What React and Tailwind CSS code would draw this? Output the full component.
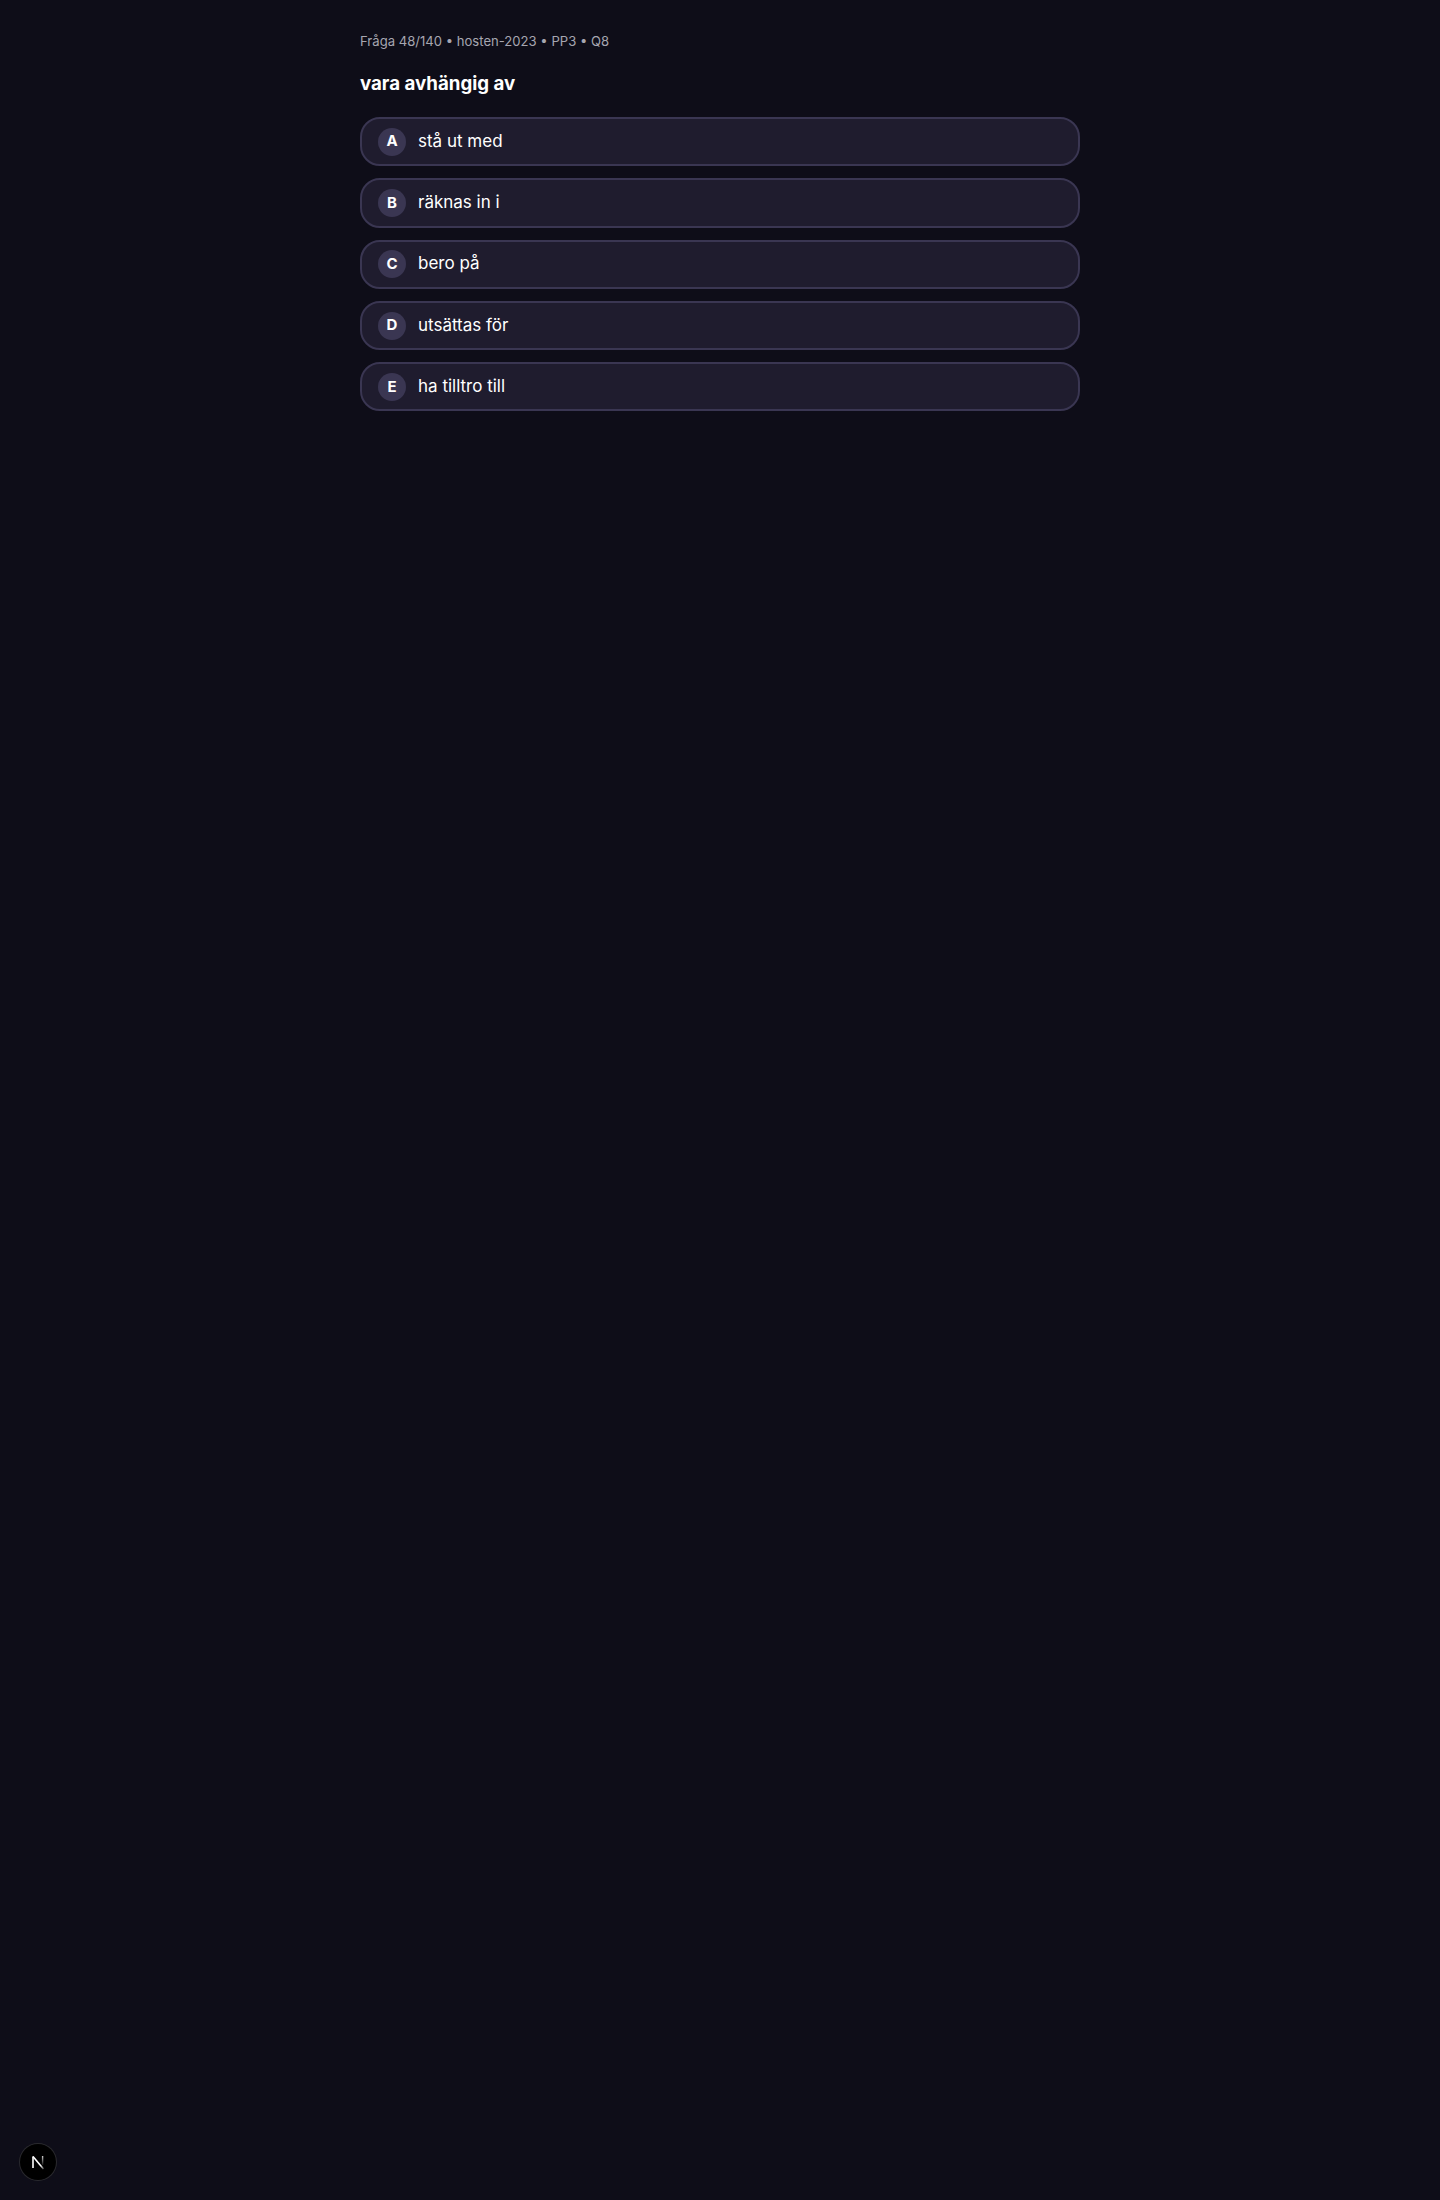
const options = [
  { letter: 'A', text: 'stå ut med' },
  { letter: 'B', text: 'räknas in i' },
  { letter: 'C', text: 'bero på' },
  { letter: 'D', text: 'utsättas för' },
  { letter: 'E', text: 'ha tilltro till' },
];

function NextBadge() {
  return (
    <div className="fixed bottom-5 left-5 flex h-9 w-9 items-center justify-center rounded-full bg-black shadow-[0_0_0_1px_#2a2a2e]">
      <svg width="16" height="16" viewBox="0 0 16 16" fill="none">
        <defs>
          <linearGradient id="next-slash" x1="4" y1="3" x2="14" y2="15" gradientUnits="userSpaceOnUse">
            <stop stopColor="#fff" />
            <stop offset="0.7" stopColor="#fff" />
            <stop offset="1" stopColor="#fff" stopOpacity="0.2" />
          </linearGradient>
          <linearGradient id="next-bar" x1="12" y1="2" x2="12" y2="11" gradientUnits="userSpaceOnUse">
            <stop stopColor="#fff" stopOpacity="0.8" />
            <stop offset="1" stopColor="#fff" stopOpacity="0.1" />
          </linearGradient>
        </defs>
        <path d="M3 14V2.5" stroke="#fff" strokeWidth="1.6" />
        <path d="M3 2.5L13.5 15" stroke="url(#next-slash)" strokeWidth="1.6" />
        <path d="M12.6 2V11" stroke="url(#next-bar)" strokeWidth="1.4" />
      </svg>
    </div>
  );
}

export default function App() {
  return (
    <div className="min-h-[2200px] bg-[#0e0d18] font-['Inter',sans-serif] text-white">
      <div className="mx-auto max-w-3xl px-6 py-8">
        <div className="-mt-px text-[13.1px] leading-5 text-[#a6a6b0]">Fråga 48/140 • hosten-2023 • PP3 • Q8</div>
        <h1 className="mt-[19px] mb-[19px] text-[18.7px] leading-7 font-bold">vara avhängig av</h1>
        <div className="flex flex-col gap-3">
          {options.map((o) => (
            <button
              key={o.letter}
              className="flex h-[49.3px] w-full items-center gap-3 rounded-[20px] border-2 border-[#3a3652] bg-[#1f1c2e] px-4 text-left"
            >
              <span className="flex h-7 w-7 shrink-0 items-center justify-center rounded-full bg-[#3a3652] text-[15px] font-bold">
                {o.letter}
              </span>
              <span className="text-[17px]">{o.text}</span>
            </button>
          ))}
        </div>
      </div>
      <NextBadge />
    </div>
  );
}
